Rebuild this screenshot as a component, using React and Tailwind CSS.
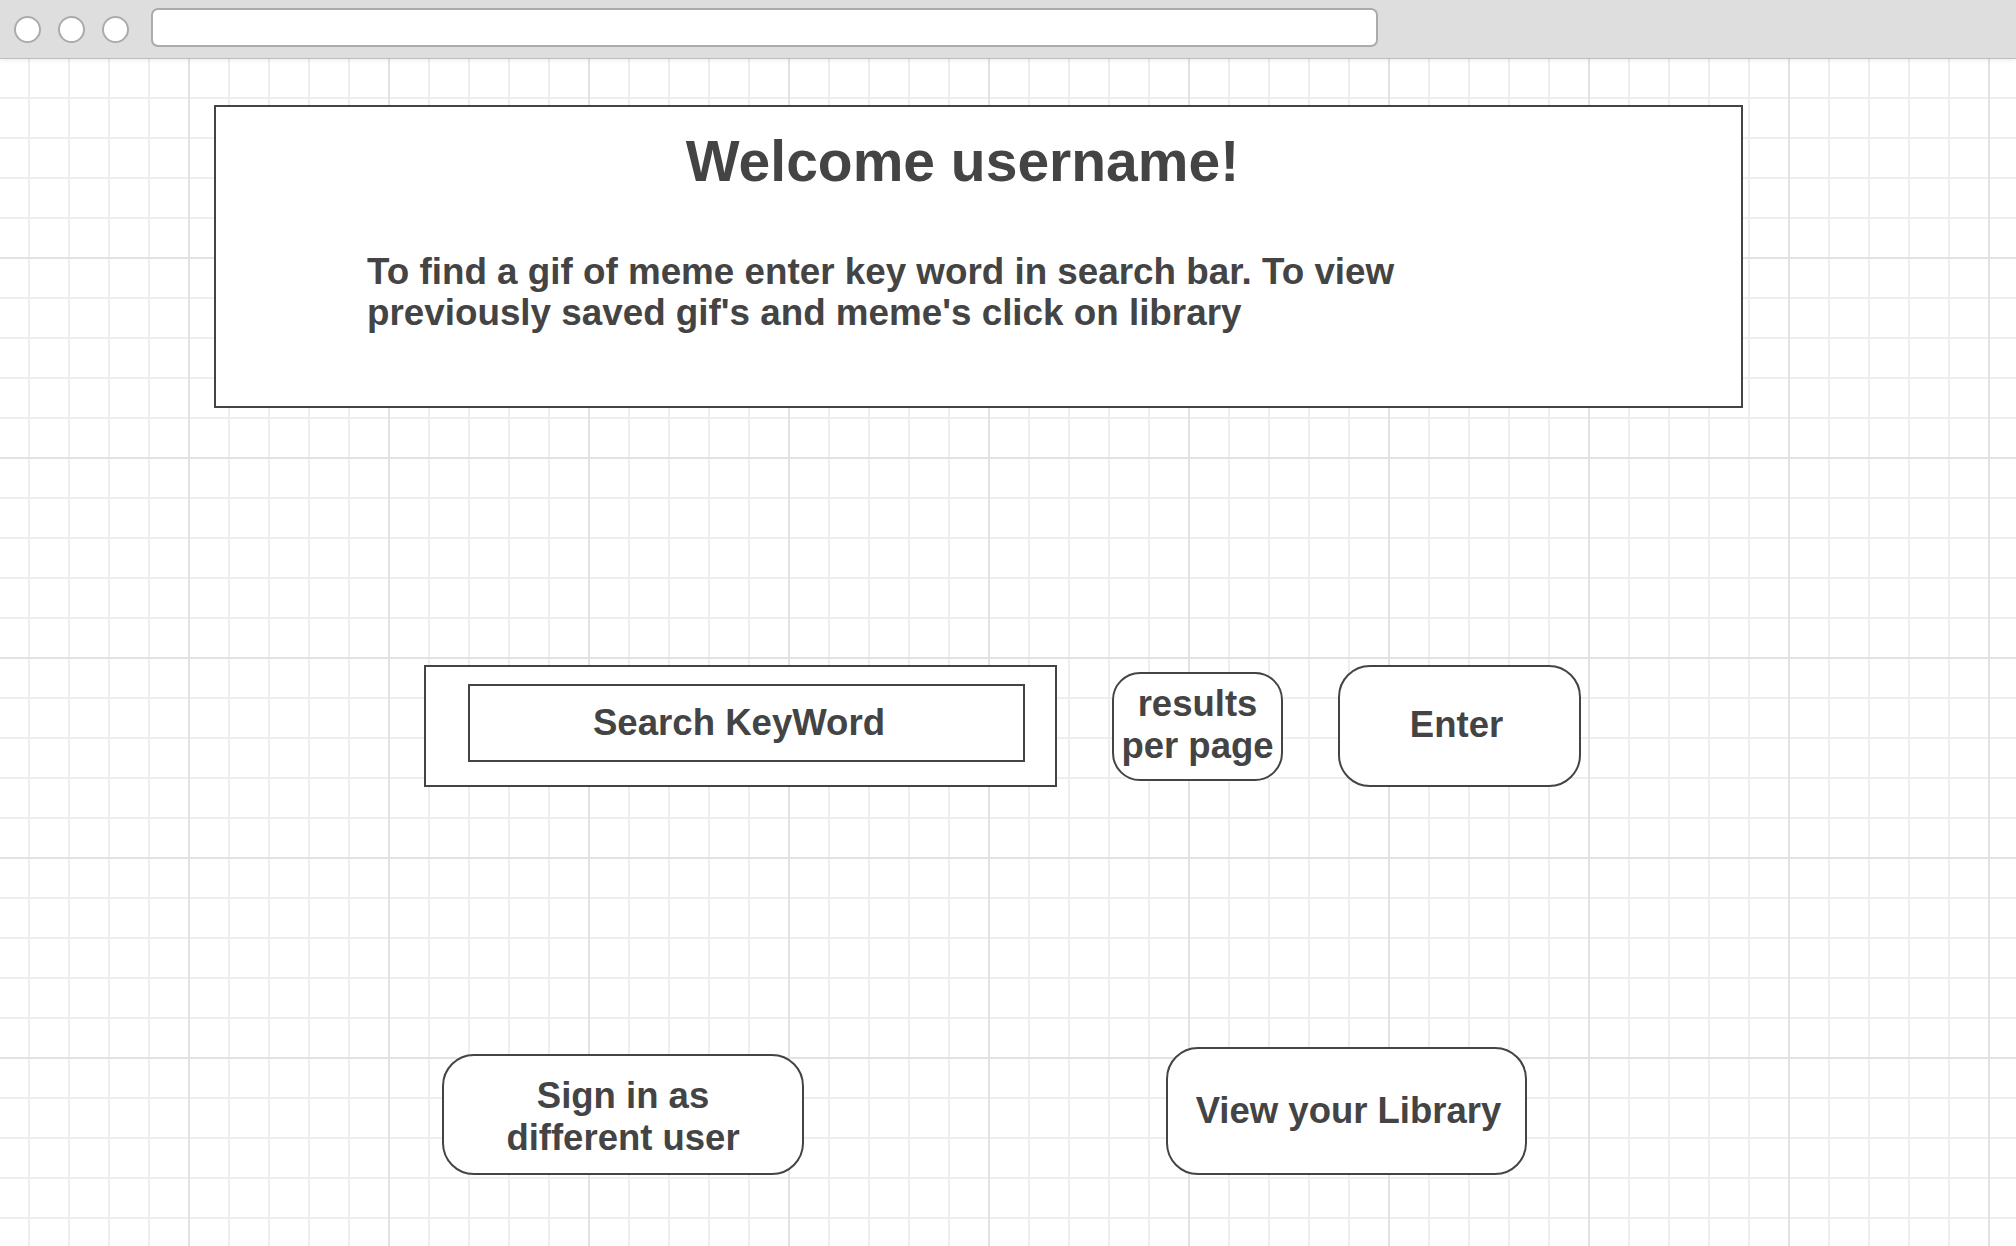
import React from 'react'

function Dot() {
  return <span className="w-[27px] h-[27px] rounded-full bg-white border-2 border-[#ababab]" />
}

function PillButton({ className, children }) {
  return (
    <button
      className={`flex items-center justify-center text-center bg-white border-2 border-[#444] font-bold text-[36.5px] leading-[42px] text-[#444] ${className}`}
    >
      {children}
    </button>
  )
}

export default function App() {
  return (
    <div className="h-screen flex flex-col overflow-hidden bg-white text-[#444] font-['Liberation_Sans',Arial,Helvetica,sans-serif]">
      {/* Browser chrome */}
      <header className="relative z-10 h-[59px] shrink-0 flex items-center bg-[#dedede] border-b border-[#bdbdbd] shadow-[0_2px_4px_rgba(0,0,0,0.06)]">
        <div className="flex items-center gap-[17px] pl-[14px]">
          <Dot />
          <Dot />
          <Dot />
        </div>
        <div className="ml-[22px] mb-[3px] w-[1227px] h-[39px] rounded-[7px] bg-white border-2 border-[#ababab]" />
      </header>

      {/* Canvas with grid */}
      <main className="flex-1 flex flex-col bg-white bg-[linear-gradient(to_right,#e2e2e2_2px,transparent_2px),linear-gradient(to_bottom,#e2e2e2_2px,transparent_2px),linear-gradient(to_right,#eeeeee_2px,transparent_2px),linear-gradient(to_bottom,#eeeeee_2px,transparent_2px)] bg-[size:200px_200px,200px_200px,40px_40px,40px_40px] bg-[position:188px_0,0_198px,28px_0,0_38px]">
        {/* Welcome box */}
        <section className="ml-[214px] mt-[46px] w-[1529px] h-[303px] shrink-0 bg-white border-2 border-[#444]">
          <h1 className="pt-[26px] pr-[32px] text-center text-[57px] leading-none font-bold">
            Welcome username!
          </h1>
          <p className="mt-[61px] pl-[151px] w-[1300px] text-[36.8px] leading-[41px] font-bold">
            To find a gif of meme enter key word in search bar. To view previously saved gif's and
            meme's click on library
          </p>
        </section>

        {/* Search row */}
        <div className="mt-[257px] ml-[424px] flex items-center gap-[55px]">
          <div className="w-[633px] h-[122px] shrink-0 bg-white border-2 border-[#444] pl-[42px] pt-[17px]">
            <div className="w-[557px] h-[78px] flex items-center justify-center pr-[15px] border-2 border-[#444] text-[36.6px] font-bold">
              Search KeyWord
            </div>
          </div>
          <PillButton className="w-[171px] h-[109px] rounded-[28px] pb-[3px]">
            results
            <br />
            per page
          </PillButton>
          <PillButton className="w-[243px] h-[122px] rounded-[32px] pb-[3px] pr-[6px]">Enter</PillButton>
        </div>

        {/* Bottom row */}
        <div className="mt-[260px] ml-[442px] flex items-end gap-[362px]">
          <PillButton className="w-[362px] h-[121px] rounded-[32px] pt-[4px]">
            Sign in as
            <br />
            different user
          </PillButton>
          <PillButton className="w-[361px] h-[128px] rounded-[32px] pl-[4px]">View your Library</PillButton>
        </div>
      </main>
    </div>
  )
}
